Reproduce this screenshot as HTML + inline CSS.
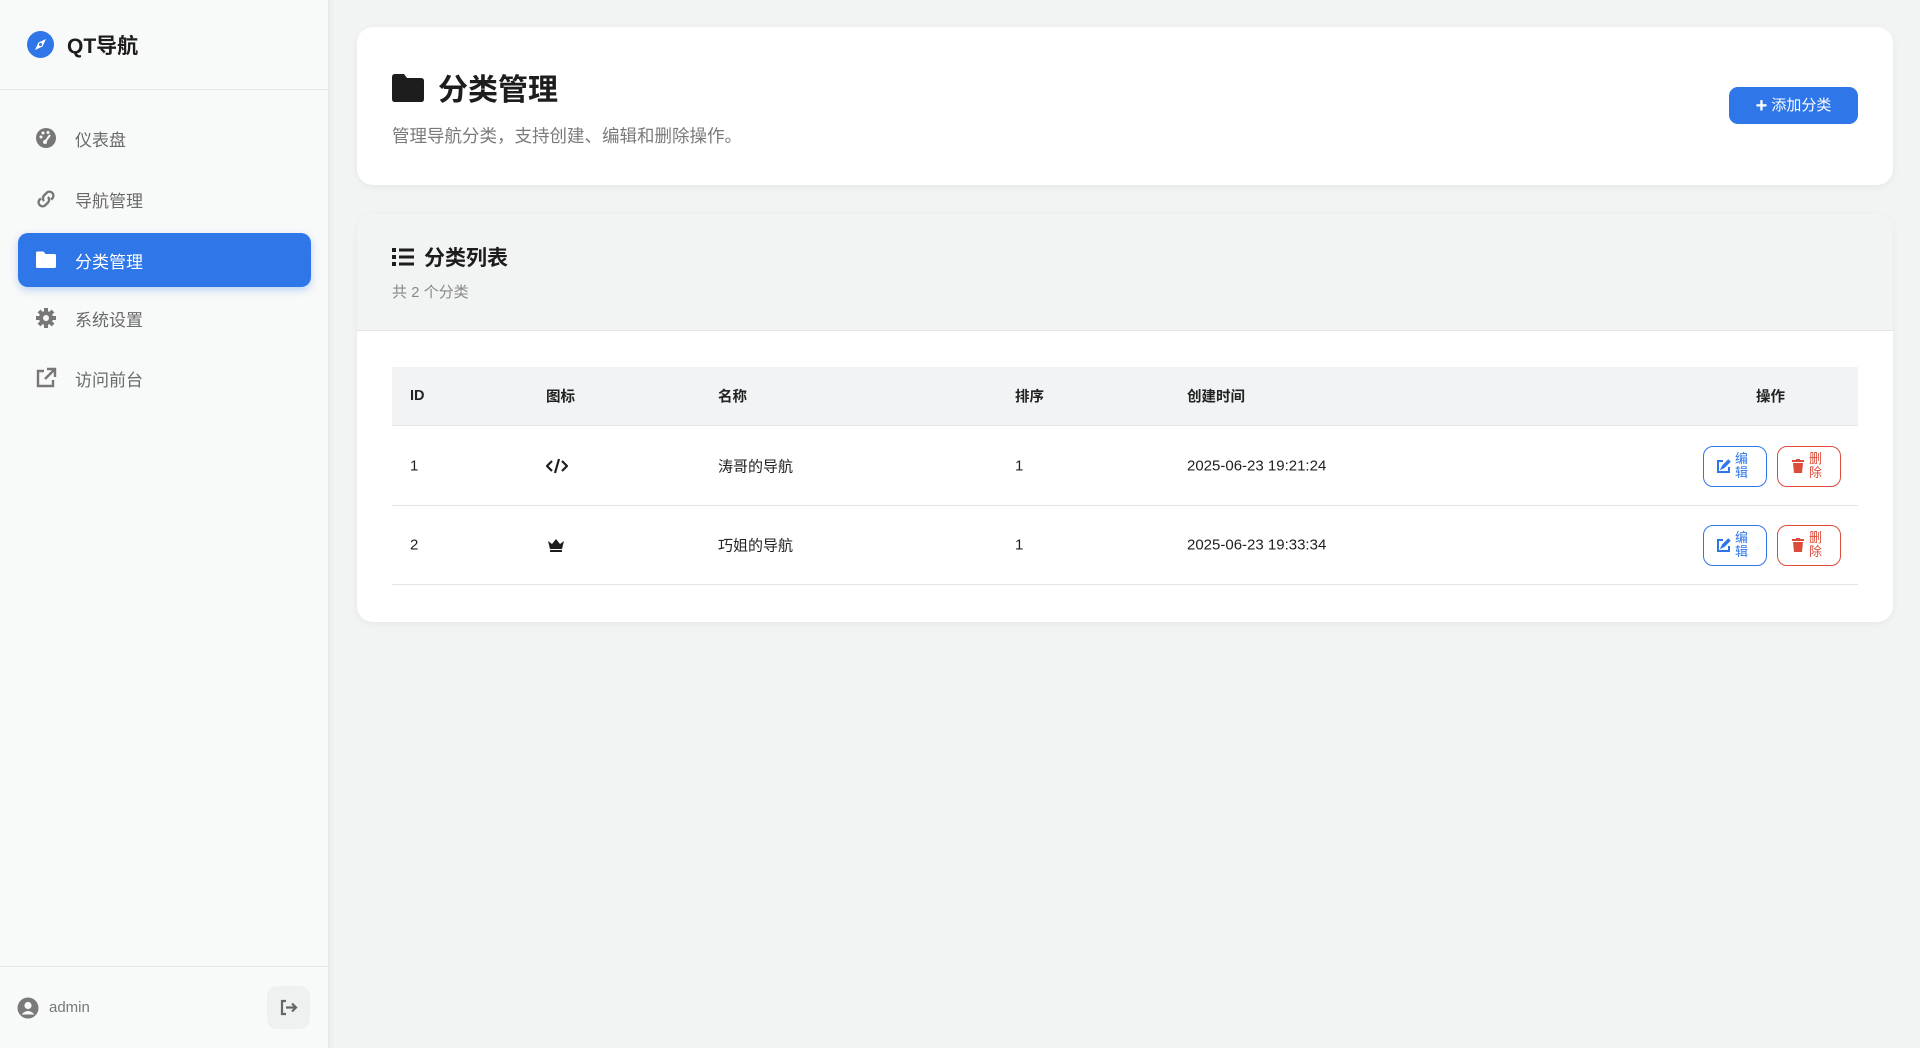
<!DOCTYPE html>
<html><head><meta charset="utf-8">
<style>
*{box-sizing:border-box;margin:0;padding:0}
body{width:1920px;height:1048px;overflow:hidden;background:#f1f4f3;font-family:"Liberation Sans","Noto Sans CJK SC",sans-serif;color:#222;position:relative}
.side{position:absolute;left:0;top:0;width:329px;height:1048px;background:#f8f9f9;border-right:1px solid #e6e8e8;box-shadow:2px 0 6px rgba(0,0,0,.04)}
.logo{position:absolute;left:27px;top:31px;width:27px;height:27px;border-radius:50%;background:#2f76e8}
.brand{position:absolute;left:67px;top:30px;font-size:21px;font-weight:bold;color:#1d1d1d}
.hr{position:absolute;left:0;width:329px;height:1px;background:#e4e6e6}
.nav{position:absolute;left:18px;width:293px;height:54px;border-radius:10px;display:flex;align-items:center;font-size:17px;color:#6a6a6a}
.nav svg{position:absolute;left:17px;width:22px;height:22px}
.nav span{position:absolute;left:57px}
.nav.act{background:#2f76e8;color:#fff;box-shadow:0 3px 8px rgba(47,118,232,.3)}
.card{position:absolute;left:357px;width:1536px;background:#fff;border-radius:16px;box-shadow:0 2px 8px rgba(0,0,0,.05)}
.th,.tr{position:absolute;left:392px;width:1466px;font-size:15px}
.th{background:#f1f3f4;height:59px;top:367px;font-weight:bold;font-size:14.5px;border-bottom:1px solid #e3e5e5}
.tr{height:80px;border-bottom:1px solid #e3e5e5}
.c{position:absolute;top:50%;transform:translateY(-50%)}
.btn{position:absolute;top:20px;width:64px;height:41px;border:1.5px solid;border-radius:10px}
.btn .t{position:absolute;left:31px;top:5px;font-size:13px;line-height:14px;width:14px}
</style></head><body>
<div class="side">
 <div class="logo"><svg width="27" height="27" viewBox="0 0 27 27"><path d="M19 8 L15.5 15.5 L8 19 L11.5 11.5Z" fill="#fff"/><circle cx="13.5" cy="13.5" r="1.5" fill="#2f76e8"/></svg></div>
 <div class="brand">QT导航</div>
 <div class="hr" style="top:89px"></div>
 <div class="nav" style="top:111px"><svg viewBox="0 0 22 22"><circle cx="11" cy="11" r="10" fill="#777"/><circle cx="6" cy="10" r="1.5" fill="#f8f9f9"/><circle cx="8" cy="6" r="1.5" fill="#f8f9f9"/><circle cx="13" cy="5.5" r="1.5" fill="#f8f9f9"/><path d="M10 15 L15 8" stroke="#f8f9f9" stroke-width="2"/><circle cx="10" cy="15" r="2" fill="#f8f9f9"/></svg><span>仪表盘</span></div>
 <div class="nav" style="top:172px"><svg viewBox="0 0 22 22" fill="none" stroke="#777" stroke-width="2.4"><path d="M9 13 a4 4 0 0 1 0-5.5 l3-3 a4 4 0 0 1 5.6 5.6 l-1.5 1.5"/><path d="M13 9 a4 4 0 0 1 0 5.5 l-3 3 a4 4 0 0 1-5.6-5.6 l1.5-1.5"/></svg><span>导航管理</span></div>
 <div class="nav act" style="top:233px"><svg viewBox="0 0 22 22"><path d="M1 4 q0-1.5 1.5-1.5 h6 l2 2.5 h9 q1.5 0 1.5 1.5 v11 q0 1.5-1.5 1.5 h-17 q-1.5 0-1.5-1.5z" fill="#fff"/></svg><span>分类管理</span></div>
 <div class="nav" style="top:291px"><svg viewBox="0 0 22 22"><circle cx="11" cy="11" r="7" fill="#777"/><g stroke="#777" stroke-width="4"><path d="M11 1v20M1 11h20M4 4l14 14M18 4L4 18"/></g><circle cx="11" cy="11" r="3" fill="#f8f9f9"/></svg><span>系统设置</span></div>
 <div class="nav" style="top:351px"><svg viewBox="0 0 22 22" fill="none" stroke="#777" stroke-width="2.4"><path d="M9 4H3v15h15v-6"/><path d="M12 2h8v8M20 2L10 12"/></svg><span>访问前台</span></div>
 <div class="hr" style="top:966px"></div>
 <svg style="position:absolute;left:17px;top:997px" width="22" height="22" viewBox="0 0 22 22"><circle cx="11" cy="11" r="10.5" fill="#7a7a7a"/><circle cx="11" cy="8.5" r="3.6" fill="#f8f9f9"/><path d="M4.5 17.5 q6.5-7 13 0" fill="#f8f9f9"/></svg>
 <div style="position:absolute;left:49px;top:999px;font-size:15px;color:#777">admin</div>
 <div style="position:absolute;left:267px;top:986px;width:43px;height:43px;border-radius:10px;background:#eff1f1"><svg style="position:absolute;left:12px;top:12px" width="19" height="19" viewBox="0 0 19 19" fill="none" stroke="#666" stroke-width="2.2"><path d="M7 3H3v13h4"/><path d="M7 9.5h10M13 5.5l4 4-4 4"/></svg></div>
</div>

<div class="card" style="top:27px;height:158px">
 <svg style="position:absolute;left:35px;top:47px" width="32" height="28" viewBox="0 0 32 28"><path d="M0 3 q0-3 3-3 h9 l3 4 h14 q3 0 3 3 v18 q0 3-3 3 h-26 q-3 0-3-3z" fill="#1d1d1d"/></svg>
 <div style="position:absolute;left:81px;top:38px;font-size:30px;font-weight:bold;color:#1d1d1d">分类管理</div>
 <div style="position:absolute;left:35px;top:96px;font-size:17.5px;color:#7a7a7a">管理导航分类，支持创建、编辑和删除操作。</div>
 <div style="position:absolute;left:1372px;top:60px;width:129px;height:37px;border-radius:9px;background:#2f76e8;color:#fff;font-size:15px;line-height:37px;text-align:center"><b style="font-size:20px;vertical-align:-2px">+</b>&nbsp;添加分类</div>
</div>

<div class="card" style="top:214px;height:408px;overflow:hidden">
 <div style="position:absolute;left:0;top:0;width:100%;height:117px;background:#f2f4f3;border-bottom:1px solid #e3e5e5"></div>
 <svg style="position:absolute;left:35px;top:34px" width="22" height="18" viewBox="0 0 22 18" fill="#1d1d1d"><rect x="0" y="0" width="4" height="4"/><rect x="0" y="7" width="4" height="4"/><rect x="0" y="14" width="4" height="4"/><rect x="7" y="0.5" width="15" height="3"/><rect x="7" y="7.5" width="15" height="3"/><rect x="7" y="14.5" width="15" height="3"/></svg>
 <div style="position:absolute;left:67px;top:28px;font-size:21px;font-weight:bold;color:#1d1d1d">分类列表</div>
 <div style="position:absolute;left:35px;top:67px;font-size:15px;color:#888">共 2 个分类</div>
</div>

<div class="th"><span class="c" style="left:18px">ID</span><span class="c" style="left:154px">图标</span><span class="c" style="left:326px">名称</span><span class="c" style="left:623px">排序</span><span class="c" style="left:795px">创建时间</span><span class="c" style="left:1364px">操作</span></div>

<div class="tr" style="top:426px"><span class="c" style="left:18px">1</span>
 <svg class="c" style="left:154px" width="22" height="16" viewBox="0 0 22 16" fill="none" stroke="#1d1d1d" stroke-width="2.2"><path d="M6 3L1 8l5 5M16 3l5 5-5 5M13 1L9 15"/></svg>
 <span class="c" style="left:326px">涛哥的导航</span><span class="c" style="left:623px">1</span><span class="c" style="left:795px">2025-06-23 19:21:24</span>
 <div class="btn" style="left:1311px;border-color:#2f76e8;color:#2f76e8"><svg style="position:absolute;left:13px;top:12px" width="14" height="14" viewBox="0 0 14 14" fill="none" stroke="#2f76e8" stroke-width="2"><path d="M6 2H1v11h11V8"/><path d="M12 1L6 7l-1 2 2-1 6-6" fill="#2f76e8"/></svg><div class="t">编辑</div></div>
 <div class="btn" style="left:1385px;border-color:#dc4c3a;color:#dc4c3a"><svg style="position:absolute;left:14px;top:12px" width="12" height="14" viewBox="0 0 12 14" fill="#dc4c3a"><rect x="0" y="1" width="12" height="2"/><rect x="4" y="0" width="4" height="2"/><path d="M1 4h10l-1 10H2z"/></svg><div class="t">删除</div></div>
</div>

<div class="tr" style="top:505px"><span class="c" style="left:18px">2</span>
 <svg class="c" style="left:155px" width="18" height="14" viewBox="0 0 18 14" fill="#1d1d1d"><path d="M1 3l4 3 4-5 4 5 4-3-2 8H3z"/><rect x="3" y="12" width="12" height="2"/></svg>
 <span class="c" style="left:326px">巧姐的导航</span><span class="c" style="left:623px">1</span><span class="c" style="left:795px">2025-06-23 19:33:34</span>
 <div class="btn" style="left:1311px;border-color:#2f76e8;color:#2f76e8"><svg style="position:absolute;left:13px;top:12px" width="14" height="14" viewBox="0 0 14 14" fill="none" stroke="#2f76e8" stroke-width="2"><path d="M6 2H1v11h11V8"/><path d="M12 1L6 7l-1 2 2-1 6-6" fill="#2f76e8"/></svg><div class="t">编辑</div></div>
 <div class="btn" style="left:1385px;border-color:#dc4c3a;color:#dc4c3a"><svg style="position:absolute;left:14px;top:12px" width="12" height="14" viewBox="0 0 12 14" fill="#dc4c3a"><rect x="0" y="1" width="12" height="2"/><rect x="4" y="0" width="4" height="2"/><path d="M1 4h10l-1 10H2z"/></svg><div class="t">删除</div></div>
</div>
</body></html>
